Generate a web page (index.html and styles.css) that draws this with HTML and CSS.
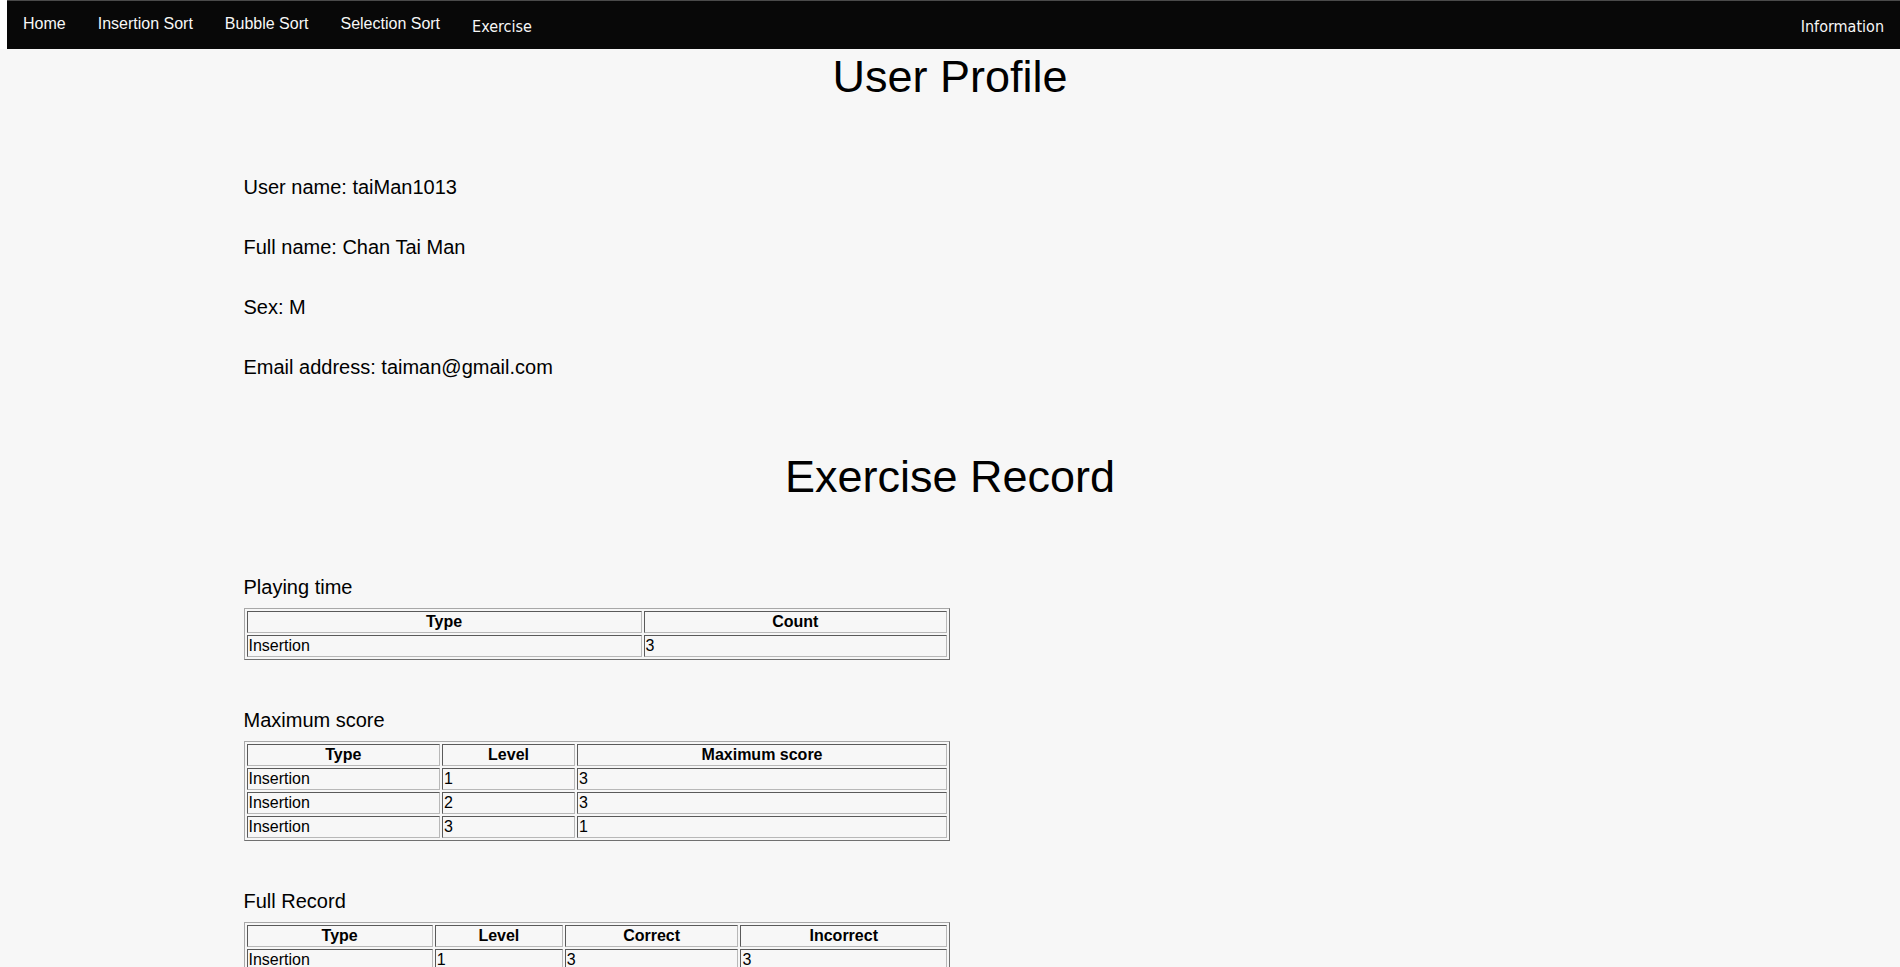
FILE: index.html
```html
<!DOCTYPE html>
<html lang="en">
<head>
<meta charset="utf-8">
<title>User Profile</title>
<link rel="stylesheet" href="styles.css">
</head>
<body>
<header class="header">
  <nav class="topnav">
    <div class="nav-left">
      <a class="nav-link" href="#">Home</a>
      <a class="nav-link" href="#">Insertion Sort</a>
      <a class="nav-link" href="#">Bubble Sort</a>
      <a class="nav-link" href="#">Selection Sort</a>
      <a class="nav-link nav-alt" href="#">Exercise</a>
    </div>
    <a class="nav-link nav-alt" href="#">Information</a>
  </nav>
</header>
<main class="page">
  <div class="container">
    <h1 class="title">User Profile</h1>
    <div class="info">
      <p class="info-line">User name: taiMan1013</p>
      <p class="info-line">Full name: Chan Tai Man</p>
      <p class="info-line">Sex: M</p>
      <p class="info-line">Email address: taiman@gmail.com</p>
    </div>
    <h2 class="title title-sub">Exercise Record</h2>

    <section class="record record-first">
      <p class="record-title">Playing time</p>
      <table class="grid">
        <tr><th>Type</th><th>Count</th></tr>
        <tr><td>Insertion</td><td>3</td></tr>
      </table>
    </section>

    <section class="record">
      <p class="record-title">Maximum score</p>
      <table class="grid">
        <tr><th>Type</th><th>Level</th><th>Maximum score</th></tr>
        <tr><td>Insertion</td><td>1</td><td>3</td></tr>
        <tr><td>Insertion</td><td>2</td><td>3</td></tr>
        <tr><td>Insertion</td><td>3</td><td>1</td></tr>
      </table>
    </section>

    <section class="record">
      <p class="record-title">Full Record</p>
      <table class="grid">
        <tr><th>Type</th><th>Level</th><th>Correct</th><th>Incorrect</th></tr>
        <tr><td>Insertion</td><td>1</td><td>3</td><td>3</td></tr>
        <tr><td>Insertion</td><td>2</td><td>3</td><td>2</td></tr>
        <tr><td>Insertion</td><td>3</td><td>1</td><td>4</td></tr>
      </table>
    </section>
  </div>
</main>
</body>
</html>
```

FILE: styles.css
```css
html {
  background: #f7f7f7;
}

body {
  margin: 0;
  background: #f7f7f7;
  color: #000;
  font-family: "Liberation Sans", Arial, sans-serif;
}

.header {
  background: #ffffff;
}

.topnav {
  margin-left: 7px;
  display: flex;
  justify-content: space-between;
  align-items: flex-start;
  background: #080808;
  border-top: 1px solid #4a4a4a;
  height: 48px;
}

.nav-left {
  display: flex;
  align-items: flex-start;
}

.nav-link {
  display: block;
  color: #f7f7f7;
  text-decoration: none;
  font-size: 16px;
  line-height: 18px;
  padding: 14px 16px 16px;
}

.nav-alt {
  font-family: "DejaVu Sans Condensed", "DejaVu Sans", sans-serif;
  font-stretch: condensed;
  padding: 17px 16px 13px;
}

.page {
  padding: 0 8px;
}

.container {
  width: 75%;
  margin: 0 auto;
}

.title {
  margin: 2px 0 0;
  text-align: center;
  font-weight: normal;
  font-size: 45px;
  line-height: 52px;
}

.title-sub {
  margin-top: 72px;
}

.info {
  margin-top: 73px;
  display: flex;
  flex-direction: column;
  gap: 37px;
}

.info-line {
  margin: 0;
  font-size: 20px;
  line-height: 23px;
}

.record {
  margin-top: 49px;
}

.record-first {
  margin-top: 73px;
}

.record-title {
  margin: 0 0 9px;
  font-size: 20px;
  line-height: 23px;
}

.grid {
  width: 50%;
  border-collapse: separate;
  border-spacing: 2px;
  border: 1px solid;
  border-color: #a8a8a8 #707070 #707070 #a8a8a8;
  font-size: 16px;
  line-height: 18px;
}

.grid th,
.grid td {
  padding: 1px;
  border: 1px solid;
  border-color: #5a5a5a #b8b8b8 #b8b8b8 #5a5a5a;
}

.grid th {
  font-weight: bold;
  text-align: center;
}

.grid td {
  text-align: left;
}
```
